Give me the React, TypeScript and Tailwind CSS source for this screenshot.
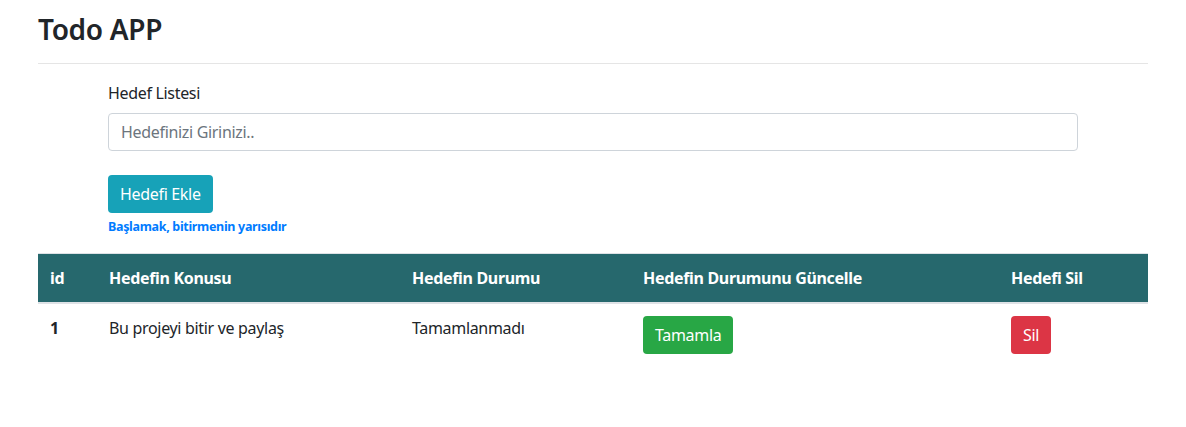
export default function App() {
  return (
    <div className="px-[38px] font-['Noto_Sans',sans-serif] tracking-[-0.02em] text-[#212529] bg-white min-h-screen">
      <h3 className="pt-[13px] text-[28px] font-semibold leading-[1.2]">Todo APP</h3>
      <hr className="mt-4 mb-[17px] border-0 border-t border-black/10" />

      <div className="ml-[70px] w-[970px]">
        <label className="block mb-2 text-base leading-6">Hedef Listesi</label>
        <input
          type="text"
          placeholder="Hedefinizi Girinizi.."
          className="block w-full h-[38px] px-3 py-1.5 text-base border border-[#ced4da] rounded bg-white placeholder:text-[#6c757d] outline-none"
        />
        <button className="mt-6 h-[38px] px-3 rounded bg-[#17a2b8] text-white text-base leading-6">Hedefi Ekle</button>
        <small className="block mt-1 text-[12.5px] font-bold leading-[20px] text-[#007bff]">
          Başlamak, bitirmenin yarısıdır
        </small>
      </div>

      <table className="mt-4 w-full table-fixed border-collapse text-base leading-6">
        <thead>
          <tr className="bg-[#26686d] text-white">
            <th className="w-[59px] p-3 text-left font-bold border-t border-b-2 border-[#dee2e6]">id</th>
            <th className="w-[303px] p-3 text-left font-bold border-t border-b-2 border-[#dee2e6]">Hedefin Konusu</th>
            <th className="w-[231px] p-3 text-left font-bold border-t border-b-2 border-[#dee2e6]">Hedefin Durumu</th>
            <th className="w-[368px] p-3 text-left font-bold border-t border-b-2 border-[#dee2e6]">Hedefin Durumunu Güncelle</th>
            <th className="p-3 text-left font-bold border-t border-b-2 border-[#dee2e6]">Hedefi Sil</th>
          </tr>
        </thead>
        <tbody>
          <tr>
            <th className="p-3 text-left font-bold align-top">1</th>
            <td className="p-3 align-top">Bu projeyi bitir ve paylaş</td>
            <td className="p-3 align-top">Tamamlanmadı</td>
            <td className="p-3 align-top">
              <button className="h-[38px] px-3 rounded bg-[#28a745] text-white">Tamamla</button>
            </td>
            <td className="p-3 align-top">
              <button className="h-[38px] px-3 rounded bg-[#dc3545] text-white">Sil</button>
            </td>
          </tr>
        </tbody>
      </table>
    </div>
  );
}
